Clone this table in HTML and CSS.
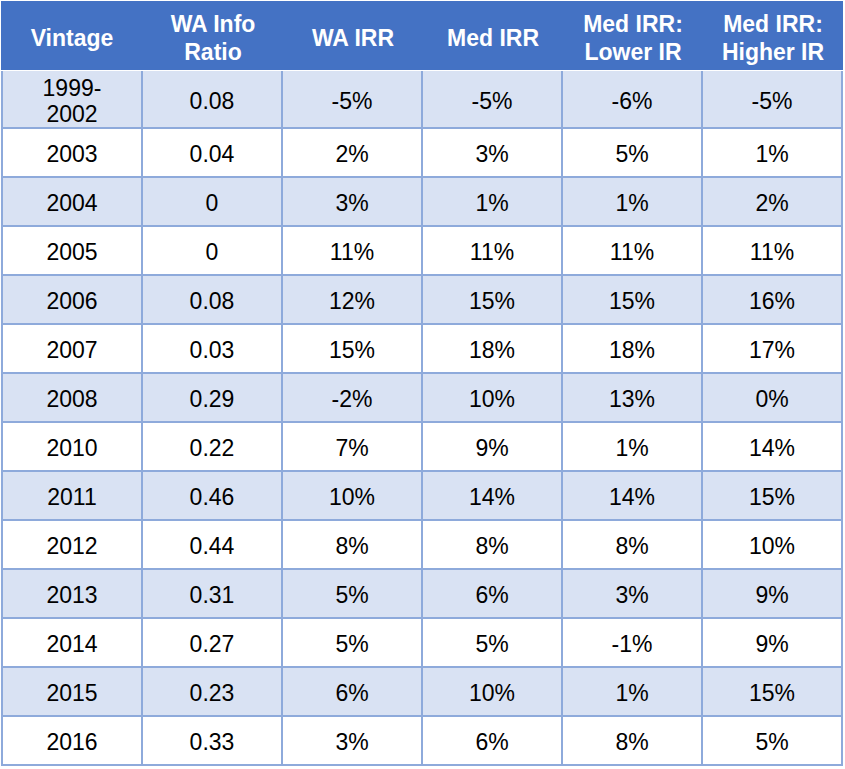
FILE: index.html
```html
<!DOCTYPE html>
<html>
<head>
<meta charset="utf-8">
<link rel="stylesheet" href="styles.css">
</head>
<body>
<div class="wrap">
<table class="grid">
<thead>
<tr><th>Vintage</th><th>WA Info<br>Ratio</th><th>WA IRR</th><th>Med IRR</th><th>Med IRR:<br>Lower IR</th><th>Med IRR:<br>Higher IR</th></tr>
</thead>
<tbody>
<tr class="alt first"><td>1999-<br>2002</td><td>0.08</td><td>-5%</td><td>-5%</td><td>-6%</td><td>-5%</td></tr>
<tr><td>2003</td><td>0.04</td><td>2%</td><td>3%</td><td>5%</td><td>1%</td></tr>
<tr class="alt"><td>2004</td><td>0</td><td>3%</td><td>1%</td><td>1%</td><td>2%</td></tr>
<tr><td>2005</td><td>0</td><td>11%</td><td>11%</td><td>11%</td><td>11%</td></tr>
<tr class="alt"><td>2006</td><td>0.08</td><td>12%</td><td>15%</td><td>15%</td><td>16%</td></tr>
<tr><td>2007</td><td>0.03</td><td>15%</td><td>18%</td><td>18%</td><td>17%</td></tr>
<tr class="alt"><td>2008</td><td>0.29</td><td>-2%</td><td>10%</td><td>13%</td><td>0%</td></tr>
<tr><td>2010</td><td>0.22</td><td>7%</td><td>9%</td><td>1%</td><td>14%</td></tr>
<tr class="alt"><td>2011</td><td>0.46</td><td>10%</td><td>14%</td><td>14%</td><td>15%</td></tr>
<tr><td>2012</td><td>0.44</td><td>8%</td><td>8%</td><td>8%</td><td>10%</td></tr>
<tr class="alt"><td>2013</td><td>0.31</td><td>5%</td><td>6%</td><td>3%</td><td>9%</td></tr>
<tr><td>2014</td><td>0.27</td><td>5%</td><td>5%</td><td>-1%</td><td>9%</td></tr>
<tr class="alt"><td>2015</td><td>0.23</td><td>6%</td><td>10%</td><td>1%</td><td>15%</td></tr>
<tr><td>2016</td><td>0.33</td><td>3%</td><td>6%</td><td>8%</td><td>5%</td></tr>
</tbody>
</table>
</div>
</body>
</html>
```
FILE: styles.css
```css
html, body {
  margin: 0;
  padding: 0;
  background: #ffffff;
}
.wrap {
  padding: 1px 0 0 1px;
}
.grid {
  width: 842px;
  border-collapse: separate;
  border-spacing: 0;
  table-layout: fixed;
  font-family: "Liberation Sans", Arial, sans-serif;
  font-size: 23px;
}
.grid th, .grid td {
  box-sizing: border-box;
  padding: 0;
  text-align: center;
  vertical-align: middle;
  width: 140px;
}
.grid th:first-child, .grid td:first-child {
  width: 142px;
}
.grid th {
  height: 70px;
  background: #4472c4;
  color: #ffffff;
  font-weight: bold;
  line-height: 28px;
  border-bottom: 1px solid #ffffff;
  padding-top: 4px;
}
.grid td {
  height: 49px;
  color: #000000;
  line-height: 26px;
  padding-top: 2px;
  border-right: 2px solid #8eaadb;
  border-bottom: 2px solid #8eaadb;
}
.grid td:first-child {
  border-left: 2px solid #8eaadb;
}
.grid tr.first td {
  height: 58px;
  padding-top: 3px;
}
.grid tr.alt td {
  background: #d9e2f3;
}
```
